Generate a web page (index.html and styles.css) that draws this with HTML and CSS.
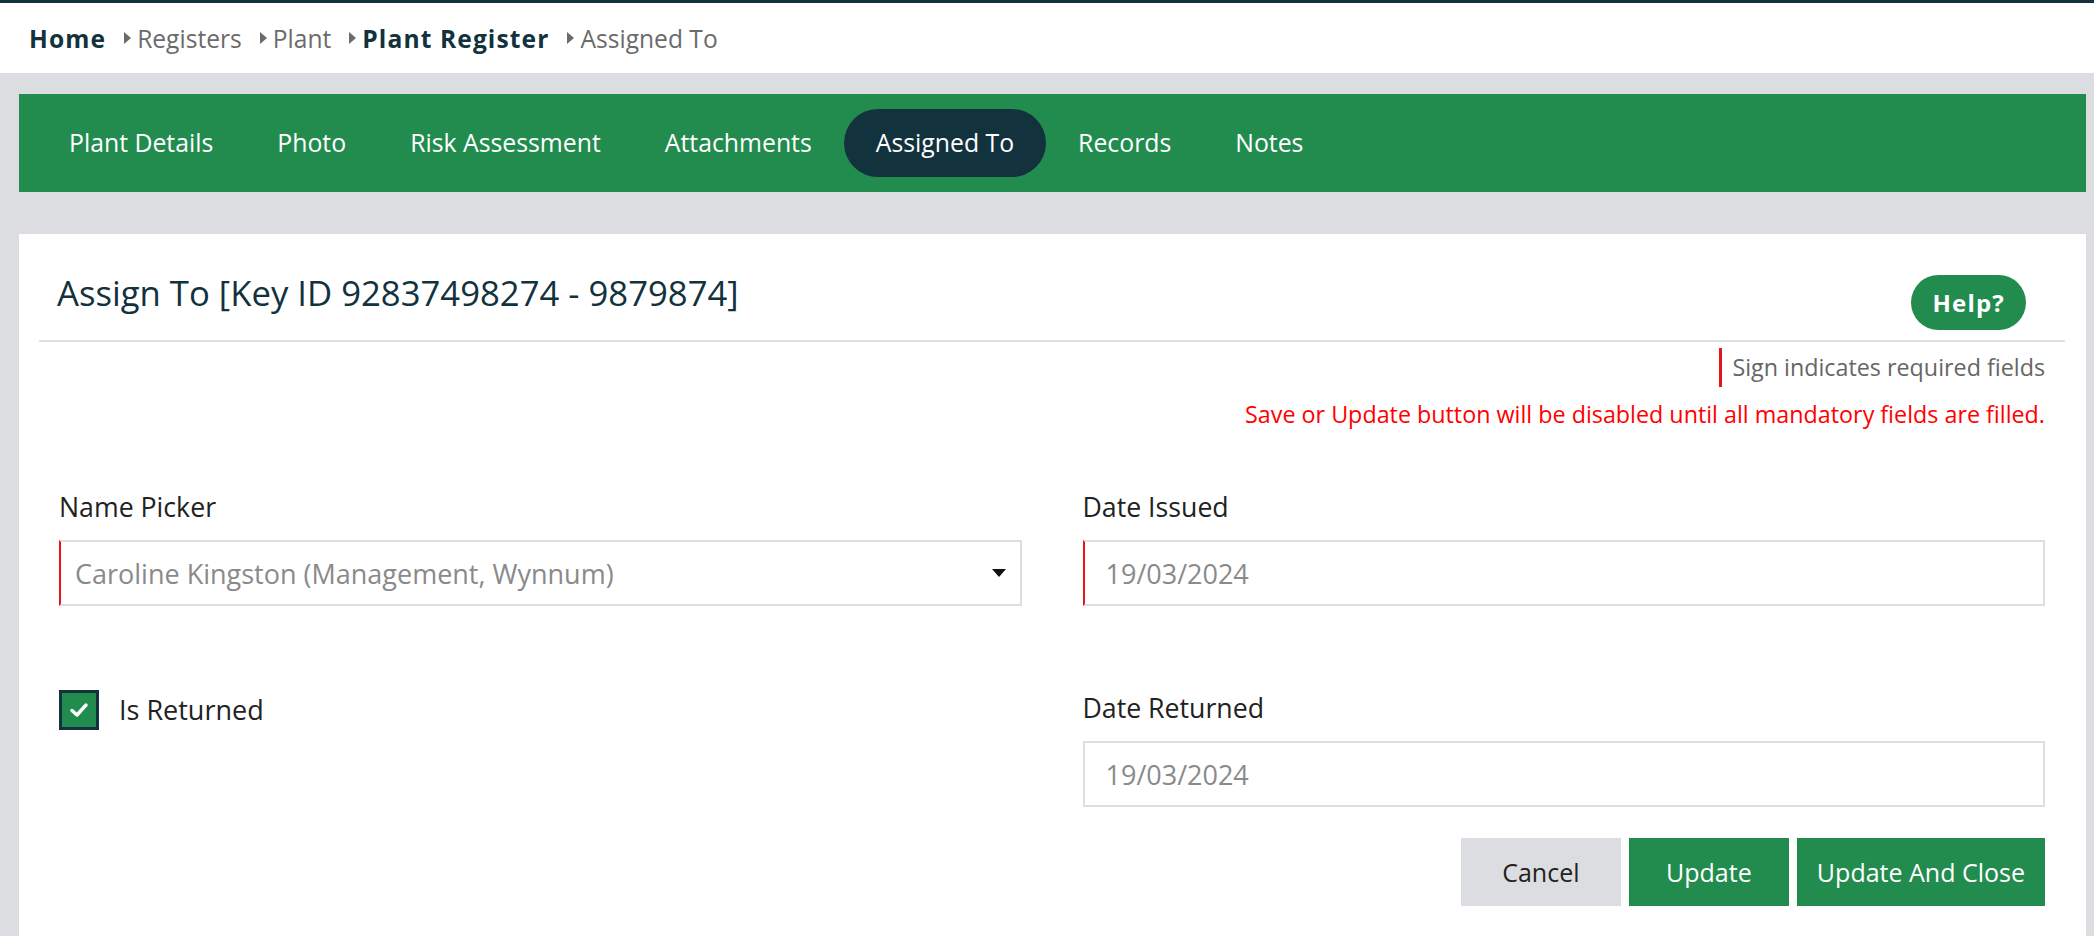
FILE: index.html
```html
<!DOCTYPE html>
<html lang="en">
<head>
  <meta charset="UTF-8">
  <title>Plant Register - Assigned To</title>
  <link rel="stylesheet" href="styles.css">
</head>
<body>

  <div class="breadcrumb">
    <a class="crumb strong" href="#">Home</a>
    <a class="crumb" href="#">Registers</a>
    <a class="crumb" href="#">Plant</a>
    <a class="crumb strong" href="#">Plant Register</a>
    <span class="crumb">Assigned To</span>
  </div>

  <nav class="tabs">
    <a class="tab" href="#">Plant Details</a>
    <a class="tab" href="#">Photo</a>
    <a class="tab" href="#">Risk Assessment</a>
    <a class="tab" href="#">Attachments</a>
    <a class="tab active" href="#">Assigned To</a>
    <a class="tab" href="#">Records</a>
    <a class="tab" href="#">Notes</a>
  </nav>

  <div class="card">
    <div class="card-head">
      <h2>Assign To [Key ID 92837498274 - 9879874]</h2>
      <button class="btn-help" type="button">Help?</button>
    </div>

    <div class="required-row">
      <span class="required-note">Sign indicates required fields</span>
    </div>
    <p class="warning">Save or Update button will be disabled until all mandatory fields are filled.</p>

    <form class="form-grid" id="assign-form">
      <div class="form-group">
        <label for="name-picker">Name Picker</label>
        <div class="select-wrap">
          <select id="name-picker" class="field required">
            <option>Caroline Kingston (Management, Wynnum)</option>
          </select>
        </div>
      </div>

      <div class="form-group">
        <label for="date-issued">Date Issued</label>
        <input type="text" id="date-issued" class="field date required" value="19/03/2024">
      </div>

      <div class="form-group">
        <label class="check" for="is-returned">
          <input type="checkbox" id="is-returned" checked>
          <span class="check-box">
            <svg width="24" height="24" viewBox="0 0 24 24"><path d="M5 12.5 L10 17 L19 7" fill="none" stroke="#fff" stroke-width="3.4" stroke-linecap="round" stroke-linejoin="round"/></svg>
          </span>
          Is Returned
        </label>
      </div>

      <div class="form-group">
        <label for="date-returned">Date Returned</label>
        <input type="text" id="date-returned" class="field date" value="19/03/2024">
      </div>
    </form>

    <div class="btn-actions">
      <button class="btn-cancel" type="button">Cancel</button>
      <button class="btn-update" type="submit" form="assign-form">Update</button>
      <button class="btn-update" type="button">Update And Close</button>
    </div>
  </div>

</body>
</html>
```

FILE: styles.css
```css
body {
  margin: 0;
  font-family: "Open Sans", "Noto Sans", sans-serif;
  background-color: #dcdde0;
  color: #222;
}

a {
  text-decoration: none;
}

/* breadcrumb */
.breadcrumb {
  display: flex;
  align-items: center;
  height: 70px;
  padding-left: 29px;
  background-color: #ffffff;
  border-top: 3px solid #12323d;
  font-size: 24.6px;
}

.crumb {
  display: flex;
  align-items: center;
  color: #6b6b6b;
}

.crumb.strong {
  color: #12323d;
  font-weight: bold;
  letter-spacing: 1.1px;
}

.crumb + .crumb {
  margin-left: 18px;
}

.crumb + .crumb::before {
  content: "";
  width: 0;
  height: 0;
  margin-right: 6px;
  border-top: 6px solid transparent;
  border-bottom: 6px solid transparent;
  border-left: 7px solid #6b6b6b;
}

/* tabs */
.tabs {
  display: flex;
  align-items: center;
  height: 98px;
  margin: 21px 8px 0 19px;
  padding-left: 18px;
  background-color: #228c4f;
}

.tab {
  height: 68px;
  line-height: 66px;
  padding: 0 32px;
  border-radius: 34px;
  color: #ffffff;
  font-size: 24.8px;
  font-weight: 500;
}

.tab.active {
  background-color: #12323d;
}

/* card */
.card {
  margin: 42px 8px 0 19px;
  padding: 0 41px 30px 40px;
  background-color: #ffffff;
}

.card-head {
  display: flex;
  justify-content: space-between;
  align-items: center;
  box-sizing: border-box;
  height: 108px;
  margin: 0 -20px;
  padding: 11px 39px 0 18px;
  border-bottom: 2px solid #dfe2e5;
}

.card-head h2 {
  margin: 0;
  color: #12323d;
  font-size: 34.7px;
  font-weight: normal;
}

.btn-help {
  height: 55px;
  margin-top: 19px;
  padding: 0 21px;
  border: none;
  border-radius: 28px;
  background-color: #228c4f;
  color: #ffffff;
  font-family: inherit;
  font-size: 24px;
  font-weight: bold;
  letter-spacing: 1.2px;
  cursor: pointer;
}

.required-row {
  display: flex;
  justify-content: flex-end;
  margin-top: 6px;
}

.required-note {
  height: 39px;
  line-height: 39px;
  padding-left: 10px;
  border-left: 3px solid #e8141c;
  color: #666666;
  font-size: 23.3px;
}

.warning {
  margin: 12px 0 0;
  line-height: 30px;
  color: #ff0000;
  font-size: 23.3px;
  text-align: right;
}

/* form */
.form-grid {
  display: grid;
  grid-template-columns: 1fr 1fr;
  column-gap: 61px;
  row-gap: 85px;
  margin-top: 61px;
}

.form-group label {
  display: block;
  margin-bottom: 16px;
  line-height: 34px;
  font-size: 26.7px;
  color: #222;
}

.field {
  display: block;
  width: 100%;
  height: 66px;
  box-sizing: border-box;
  margin: 0;
  padding: 0 40px 0 14px;
  border: 2px solid #dedede;
  border-radius: 0;
  background-color: #ffffff;
  color: #8a8a8a;
  font-family: inherit;
  font-size: 27px;
  outline: none;
}

.field.date {
  padding-left: 21px;
}

.field.required {
  border-left-color: #e8141c;
}

.select-wrap {
  position: relative;
}

.select-wrap select {
  appearance: none;
  -webkit-appearance: none;
}

.select-wrap::after {
  content: "";
  position: absolute;
  top: 29px;
  right: 16px;
  border-left: 7px solid transparent;
  border-right: 7px solid transparent;
  border-top: 8px solid #111;
  pointer-events: none;
}

.form-group label.check {
  display: flex;
  align-items: center;
  height: 34px;
  margin: 0;
  padding-top: 2px;
  font-size: 27px;
  cursor: pointer;
}

.check input {
  display: none;
}

.check-box {
  display: flex;
  align-items: center;
  justify-content: center;
  flex-shrink: 0;
  width: 40px;
  height: 40px;
  box-sizing: border-box;
  margin-right: 20px;
  border: 3px solid #12323d;
  background-color: #228c4f;
}

/* buttons */
.btn-actions {
  display: flex;
  justify-content: flex-end;
  gap: 8px;
  margin-top: 31px;
}

.btn-actions button {
  min-width: 160px;
  height: 68px;
  padding: 0 20px;
  border: none;
  font-family: inherit;
  font-size: 25px;
  cursor: pointer;
}

.btn-cancel {
  background-color: #dcdde0;
  color: #222;
}

.btn-update {
  background-color: #228c4f;
  color: #ffffff;
}

.btn-update:hover {
  background-color: #1c7743;
}
```
